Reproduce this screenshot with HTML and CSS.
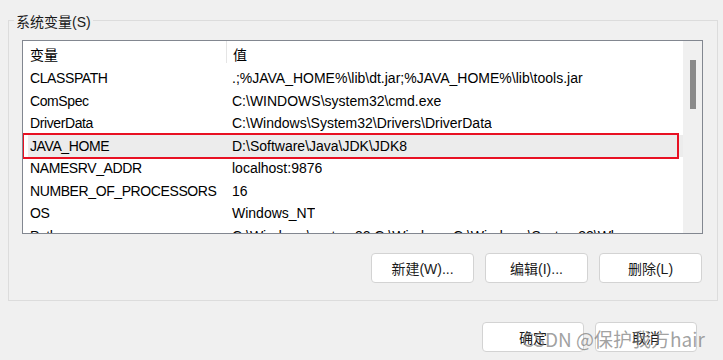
FILE: index.html
```html
<!DOCTYPE html>
<html lang="zh-CN">
<head>
  <meta charset="UTF-8" />
  <title>系统变量</title>
  <link rel="stylesheet" href="styles.css">
</head>
<body>
  <div class="group">
    <span class="group-title">系统变量(S)</span>
    <div class="list">
      <div class="list-body">
        <div class="row head">
          <div class="col name">变量</div>
          <div class="col value">值</div>
        </div>
        <div class="row"><div class="col name">CLASSPATH</div><div class="col value">.;%JAVA_HOME%\lib\dt.jar;%JAVA_HOME%\lib\tools.jar</div></div>
        <div class="row"><div class="col name">ComSpec</div><div class="col value">C:\WINDOWS\system32\cmd.exe</div></div>
        <div class="row"><div class="col name">DriverData</div><div class="col value">C:\Windows\System32\Drivers\DriverData</div></div>
        <div class="row selected"><div class="col name">JAVA_HOME</div><div class="col value">D:\Software\Java\JDK\JDK8</div></div>
        <div class="row"><div class="col name">NAMESRV_ADDR</div><div class="col value">localhost:9876</div></div>
        <div class="row"><div class="col name">NUMBER_OF_PROCESSORS</div><div class="col value">16</div></div>
        <div class="row"><div class="col name">OS</div><div class="col value">Windows_NT</div></div>
        <div class="row"><div class="col name">Path</div><div class="col value">C:\Windows\system32;C:\Windows;C:\Windows\System32\Wbem</div></div>
      </div>
      <div class="scrollbar"><div class="thumb"></div></div>
      <div class="mark"></div>
    </div>
    <div class="actions">
      <button>新建(W)...</button>
      <button>编辑(I)...</button>
      <button>删除(L)</button>
    </div>
  </div>
  <div class="footer">
    <button>确定</button>
    <button>取消</button>
  </div>
  <div class="watermark">CSDN @保护我方hair</div>
</body>
</html>
```

FILE: styles.css
```css
body {
  margin: 0;
  width: 723px;
  height: 360px;
  overflow: hidden;
  background: #f0f0f0;
  font-family: 'Liberation Sans', 'Noto Sans CJK SC', sans-serif;
  font-size: 14px;
  color: #000;
  position: relative;
}
.group {
  position: relative;
  margin: 20px 5px 0 8px;
  border: 1px solid #dcdcdc;
  padding: 19px 14px 0 13px;
  box-sizing: border-box;
  height: 281px;
}
.group-title {
  position: absolute;
  top: -10px;
  left: 5px;
  padding: 0 2px;
  background: #f0f0f0;
  font-size: 14px;
  color: #1a1a1a;
}
.list {
  position: relative;
  display: flex;
  height: 194px;
  border: 1px solid #828790;
  background: #fff;
  box-sizing: border-box;
  overflow: hidden;
}
.list-body {
  flex: 1;
  overflow: hidden;
}
.row {
  display: flex;
  height: 22.5px;
  line-height: 22.5px;
  white-space: nowrap;
}
.row.head {
  height: 26px;
  line-height: 28px;
}
.row.selected {
  background: #ececec;
  margin-left: 5px;
}
.row.selected .name {
  padding-left: 2px;
}
.col.name {
  width: 196px;
  padding-left: 7px;
  flex-shrink: 0;
  letter-spacing: -0.4px;
}
.col.value {
  padding-left: 6px;
  overflow: hidden;
}
.head .name {
  border-right: 1px solid #e5e5e5;
  height: 22px;
  letter-spacing: 0;
}
.scrollbar {
  width: 19px;
  background: #f0f0f0;
  padding-top: 19px;
  box-sizing: border-box;
}
.thumb {
  width: 6px;
  height: 49px;
  margin-left: 7px;
  background: #8a8a8a;
}
.mark {
  position: absolute;
  left: -1px;
  top: 92px;
  width: 653px;
  height: 22px;
  border: 2px solid #e81123;
}
.actions {
  display: flex;
  justify-content: flex-end;
  gap: 11px;
  margin-top: 19px;
  margin-right: 1px;
}
button {
  width: 103px;
  height: 30px;
  background: #fff;
  border: 1px solid #d3d3d3;
  border-radius: 4px;
  font-family: 'Liberation Sans', 'Noto Sans CJK SC', sans-serif;
  font-size: 14px;
  color: #1a1a1a;
  padding: 0;
}
.footer {
  display: flex;
  justify-content: flex-end;
  gap: 11px;
  margin-top: 21px;
  margin-right: 26px;
}
.footer button {
  width: 102px;
}
.watermark {
  position: absolute;
  left: 522px;
  top: 326px;
  font-family: 'Noto Sans CJK SC', sans-serif;
  font-size: 19px;
  line-height: 26px;
  color: rgba(120, 120, 120, 0.7);
  white-space: nowrap;
}
```
